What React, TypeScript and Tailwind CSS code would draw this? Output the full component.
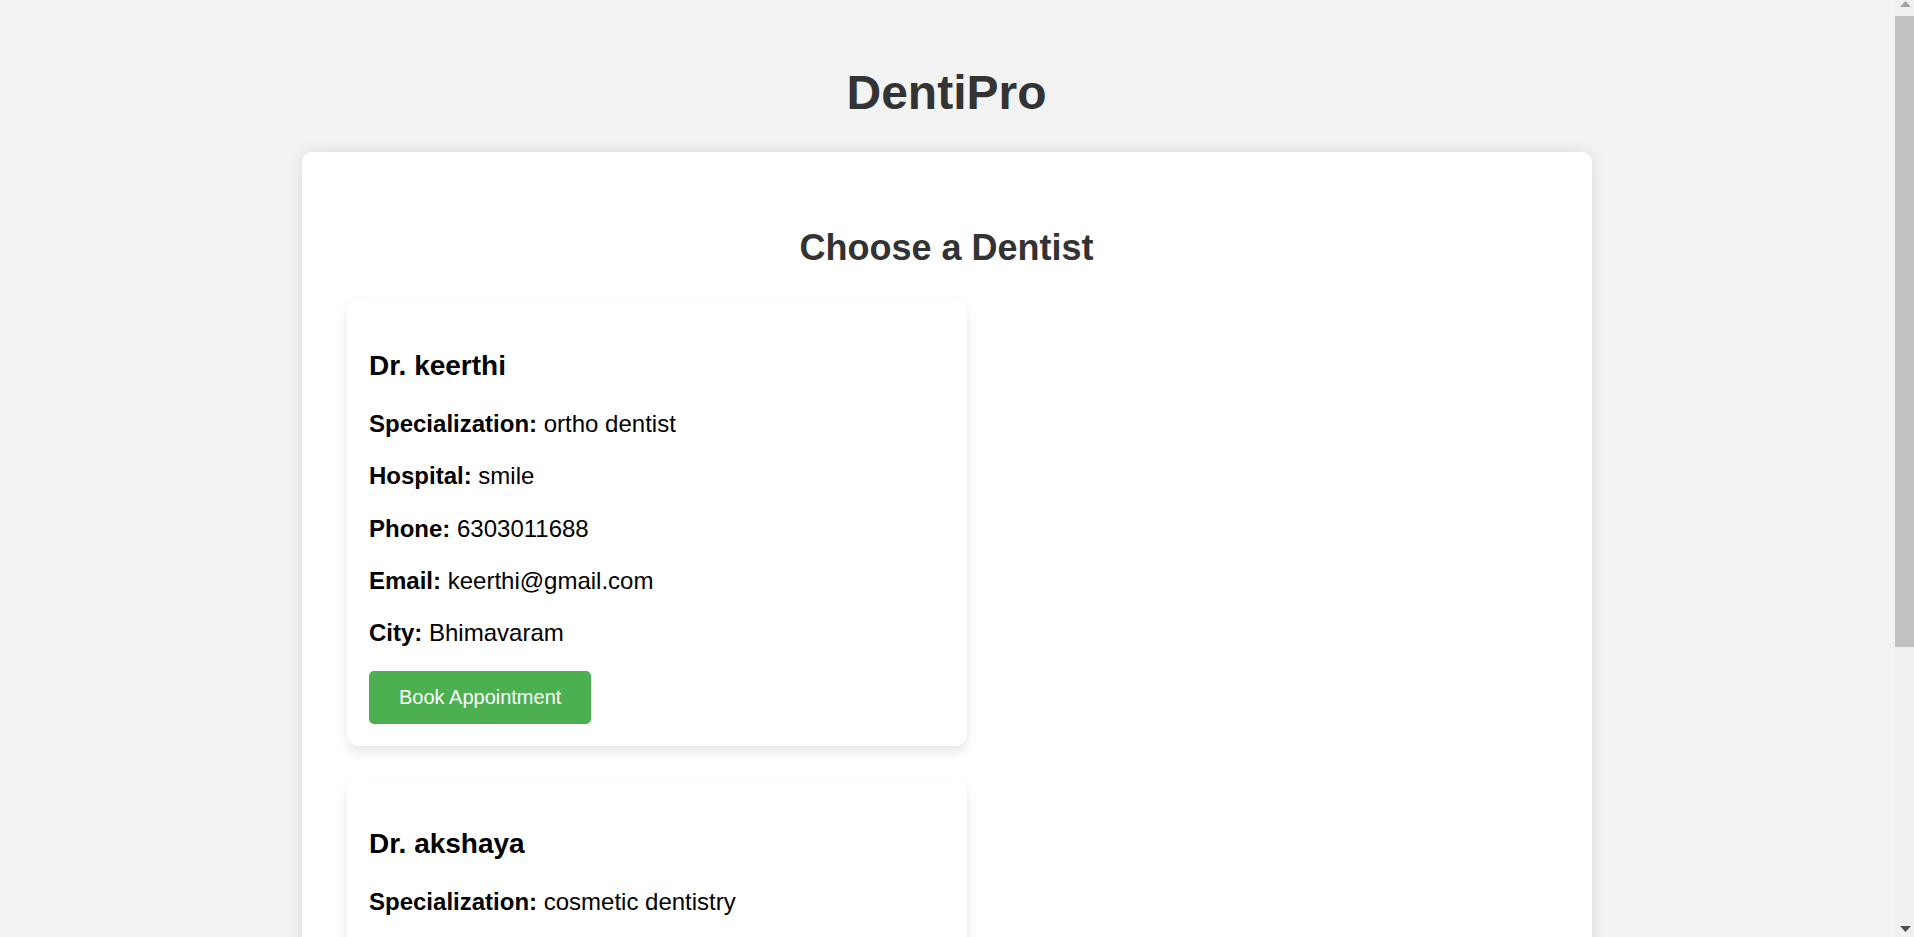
import React from "react";

type Dentist = {
  name: string;
  specialization: string;
  hospital: string;
  phone: string;
  email: string;
  city: string;
};

const dentists: Dentist[] = [
  {
    name: "keerthi",
    specialization: "ortho dentist",
    hospital: "smile",
    phone: "6303011688",
    email: "keerthi@gmail.com",
    city: "Bhimavaram",
  },
  {
    name: "akshaya",
    specialization: "cosmetic dentistry",
    hospital: "care",
    phone: "9876543210",
    email: "akshaya@gmail.com",
    city: "Bhimavaram",
  },
];

function Field({ label, value }: { label: string; value: string }) {
  return (
    <p className="mb-[24px] text-[24px] leading-[28.2px] text-black">
      <strong className="font-bold">{label}:</strong> {value}
    </p>
  );
}

function Card({ d }: { d: Dentist }) {
  return (
    <div className="w-[620px] rounded-[12px] bg-white p-[22.5px] pt-[50.5px] shadow-[0_6px_12px_rgba(0,0,0,0.1)]">
      <h3 className="mb-[28px] text-[28px] font-bold leading-[32.2px] text-black">Dr. {d.name}</h3>
      <Field label="Specialization" value={d.specialization} />
      <Field label="Hospital" value={d.hospital} />
      <Field label="Phone" value={d.phone} />
      <Field label="Email" value={d.email} />
      <div className="-mb-[24px]">
        <Field label="City" value={d.city} />
      </div>
      <button className="mt-[23.5px] h-[53px] rounded-[5px] bg-[#4caf50] px-[30px] text-[20px] leading-[23px] text-white">
        Book Appointment
      </button>
    </div>
  );
}

function FakeScrollbar() {
  return (
    <div className="fixed right-0 top-0 flex h-screen w-[21px] flex-col bg-[#f1f1f1]">
      <div className="flex h-[16px] justify-end pr-[3px] pt-[1px]">
        <svg width="11" height="7" viewBox="0 0 11 7">
          <polygon points="5.5,0 11,6 0,6" fill="#a3a3a3" />
        </svg>
      </div>
      <div className="ml-[2px] h-[631px] bg-[#c1c1c1]" />
      <div className="flex-1" />
      <div className="flex h-[16px] items-end justify-end pb-[4px] pr-[3px]">
        <svg width="11" height="7" viewBox="0 0 11 7">
          <polygon points="0,0 11,0 5.5,6" fill="#505050" />
        </svg>
      </div>
    </div>
  );
}

export default function App() {
  return (
    <div
      className="min-h-screen bg-[#f3f3f3] pb-[58px]"
      style={{ fontFamily: '"Liberation Sans", Arial, sans-serif' }}
    >
      <div className="flex flex-col items-center pr-[21px] pt-[66px]">
        <h1 className="mb-[32px] text-[48px] font-bold leading-[54px] text-[#333]">DentiPro</h1>
        <div className="w-[1290px] rounded-[10px] bg-white px-[45px] pb-[45px] pt-[75px] shadow-[0_0_15px_rgba(0,0,0,0.1)]">
          <h2 className="mb-[31px] text-center text-[36px] font-bold leading-[41.4px] text-[#333]">
            Choose a Dentist
          </h2>
          <div className="flex flex-col gap-[31px]">
            {dentists.map((d) => (
              <Card key={d.name} d={d} />
            ))}
          </div>
        </div>
      </div>
      <FakeScrollbar />
    </div>
  );
}
